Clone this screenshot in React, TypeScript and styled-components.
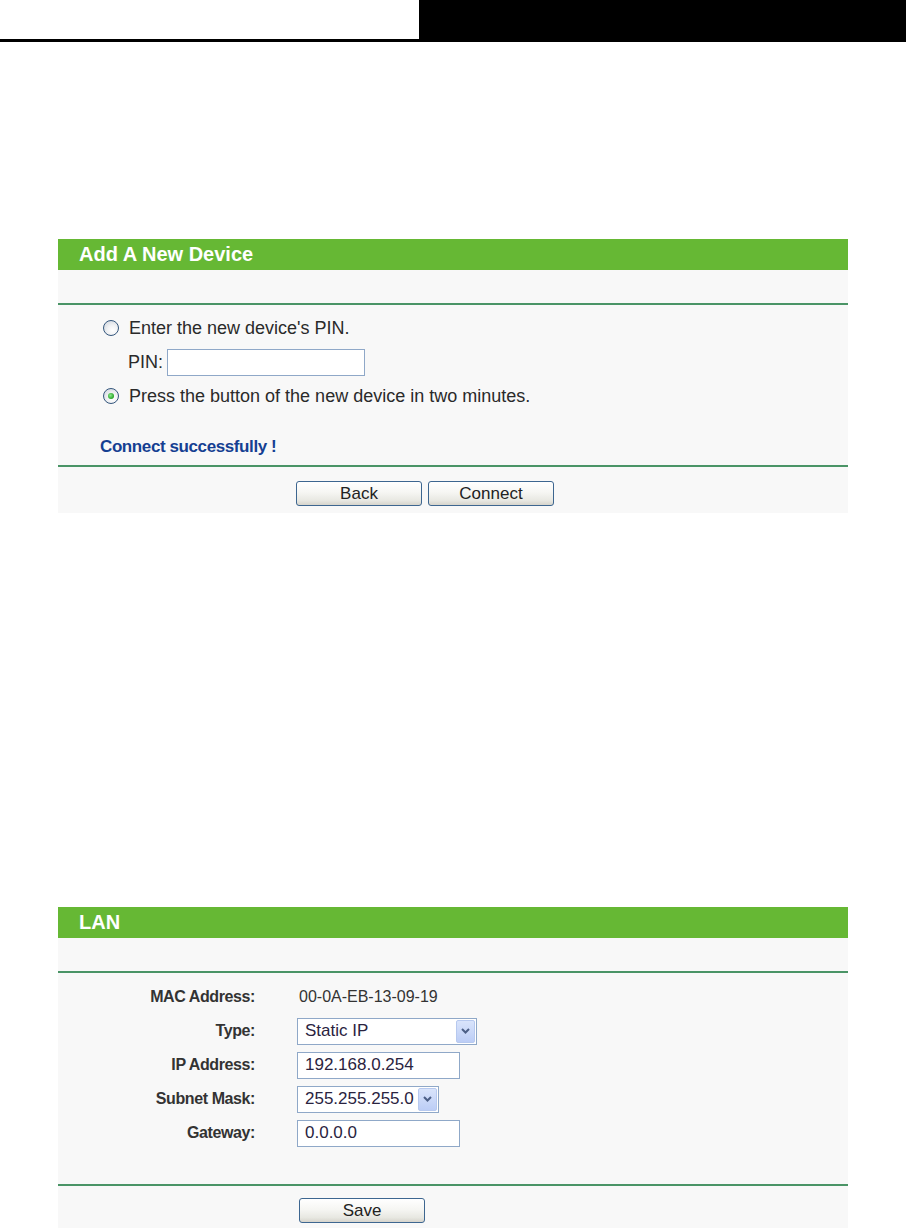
import React from "react";
import styled, { createGlobalStyle } from "styled-components";

const GlobalStyle = createGlobalStyle`
  html, body { margin: 0; padding: 0; background: #ffffff; }
  body { font-family: "Liberation Sans", Arial, sans-serif; color: #222; }
  * { box-sizing: border-box; }
`;

const TopBar = styled.div`
  display: flex;
  height: 42px;
`;
const TopLeft = styled.div`
  width: 419px;
  border-bottom: 3px solid #000;
`;
const TopRight = styled.div`
  flex: 1;
  background: #000;
`;

const Panel = styled.section<{ $top: number }>`
  width: 790px;
  margin: ${(p) => p.$top}px 0 0 58px;
  background: #f8f8f8;
`;
const Header = styled.div`
  height: 31px;
  line-height: 31px;
  background: #66b834;
  color: #fff;
  font-size: 20px;
  font-weight: bold;
  padding-left: 21px;
`;
const Spacer = styled.div`
  height: 33px;
`;
const Divider = styled.div`
  height: 2px;
  background: #4a9466;
`;

const Body = styled.div<{ $pt: number; $pb: number }>`
  padding: ${(p) => p.$pt}px 0 ${(p) => p.$pb}px 0;
`;

const RadioRow = styled.label`
  display: flex;
  align-items: center;
  height: 34px;
  padding-left: 45px;
  gap: 10px;
  font-size: 18px;
  color: #2a2a2a;
`;
const Radio = styled.span<{ $checked?: boolean }>`
  position: relative;
  width: 16px;
  height: 16px;
  border-radius: 50%;
  border: 1.5px solid #34567c;
  background: radial-gradient(circle at 62% 66%, #ffffff 0%, #f1f2f4 40%, #c9d0d9 100%);
  flex: none;
  &::after {
    content: "";
    display: ${(p) => (p.$checked ? "block" : "none")};
    position: absolute;
    left: 3.5px;
    top: 3.5px;
    width: 6px;
    height: 6px;
    border-radius: 50%;
    background: radial-gradient(circle at 40% 40%, #8be98b 0%, #1f9f1f 75%);
  }
`;
const PinRow = styled.div`
  display: flex;
  align-items: center;
  height: 34px;
  padding-left: 70px;
  gap: 4px;
  font-size: 18px;
  color: #2a2a2a;
`;
const TextInput = styled.input<{ $w: number }>`
  width: ${(p) => p.$w}px;
  height: 27px;
  border: 1px solid #8fa8c8;
  background: #fff;
  padding: 0 6px;
  font-family: "Liberation Sans", Arial, sans-serif;
  font-size: 16px;
  color: #222;
  outline: none;
`;
const Gap = styled.div<{ $h: number }>`
  height: ${(p) => p.$h}px;
`;
const Status = styled.div`
  height: 34px;
  line-height: 34px;
  padding-left: 42px;
  font-size: 17px;
  font-weight: bold;
  letter-spacing: -0.4px;
  color: #153f92;
`;

const ButtonRow = styled.div<{ $pl: number; $h: number; $pt: number }>`
  display: flex;
  gap: 6px;
  padding: ${(p) => p.$pt}px 0 0 ${(p) => p.$pl}px;
  height: ${(p) => p.$h}px;
`;
const Button = styled.button`
  width: 126px;
  height: 25px;
  border: 1px solid #3d6690;
  border-radius: 3px;
  background: linear-gradient(#ffffff 0%, #f6f6f3 45%, #e8e8e2 80%, #d6d4cc 100%);
  font-family: "Liberation Sans", Arial, sans-serif;
  font-size: 17px;
  color: #222;
  padding: 0;
  line-height: 23px;
`;

const FormGrid = styled.div`
  display: grid;
  grid-template-columns: 197px 1fr;
  column-gap: 42px;
  grid-auto-rows: 34px;
  align-items: center;
`;
const Label = styled.div`
  text-align: right;
  font-size: 16px;
  font-weight: bold;
  letter-spacing: -0.4px;
  color: #333;
`;
const Value = styled.div`
  font-size: 16px;
  color: #333;
  padding-left: 2px;
`;
const FieldInput = styled(TextInput)`
  font-size: 17px;
  padding: 0 7px;
  color: #2a2340;
`;
const SelectBox = styled.div<{ $w: number }>`
  width: ${(p) => p.$w}px;
  height: 27px;
  border: 1px solid #8fa8c8;
  background: #fff;
  display: flex;
  align-items: center;
  justify-content: space-between;
  padding: 1px 1px 1px 7px;
  font-size: 17px;
  color: #2a2340;
`;
const SelectArrow = styled.span`
  width: 19px;
  height: 100%;
  border: 1px solid #b7c9ef;
  border-radius: 2px;
  background: linear-gradient(#d9e4fb, #bccdf6);
  display: flex;
  align-items: center;
  justify-content: center;
`;

const Chevron = () => (
  <svg width="9" height="6" viewBox="0 0 9 6">
    <path d="M1 1 L4.5 4.5 L8 1" fill="none" stroke="#4c5f86" strokeWidth="2" />
  </svg>
);

export default function App() {
  return (
    <>
      <GlobalStyle />
      <TopBar>
        <TopLeft />
        <TopRight />
      </TopBar>

      <Panel $top={197}>
        <Header>Add A New Device</Header>
        <Spacer />
        <Divider />
        <Body $pt={6} $pb={1}>
          <RadioRow>
            <Radio />
            Enter the new device's PIN.
          </RadioRow>
          <PinRow>
            PIN:
            <TextInput $w={198} defaultValue="" />
          </PinRow>
          <RadioRow>
            <Radio $checked />
            Press the button of the new device in two minutes.
          </RadioRow>
          <Gap $h={17} />
          <Status>Connect successfully !</Status>
        </Body>
        <Divider />
        <ButtonRow $pl={238} $pt={14} $h={46}>
          <Button>Back</Button>
          <Button>Connect</Button>
        </ButtonRow>
      </Panel>

      <Panel $top={394}>
        <Header>LAN</Header>
        <Spacer />
        <Divider />
        <Body $pt={7} $pb={34}>
          <FormGrid>
            <Label>MAC Address:</Label>
            <Value>00-0A-EB-13-09-19</Value>
            <Label>Type:</Label>
            <SelectBox $w={180}>
              Static IP
              <SelectArrow>
                <Chevron />
              </SelectArrow>
            </SelectBox>
            <Label>IP Address:</Label>
            <FieldInput $w={163} defaultValue="192.168.0.254" />
            <Label>Subnet Mask:</Label>
            <SelectBox $w={142}>
              255.255.255.0
              <SelectArrow>
                <Chevron />
              </SelectArrow>
            </SelectBox>
            <Label>Gateway:</Label>
            <FieldInput $w={163} defaultValue="0.0.0.0" />
          </FormGrid>
        </Body>
        <Divider />
        <ButtonRow $pl={241} $pt={12} $h={44}>
          <Button>Save</Button>
        </ButtonRow>
      </Panel>
    </>
  );
}
